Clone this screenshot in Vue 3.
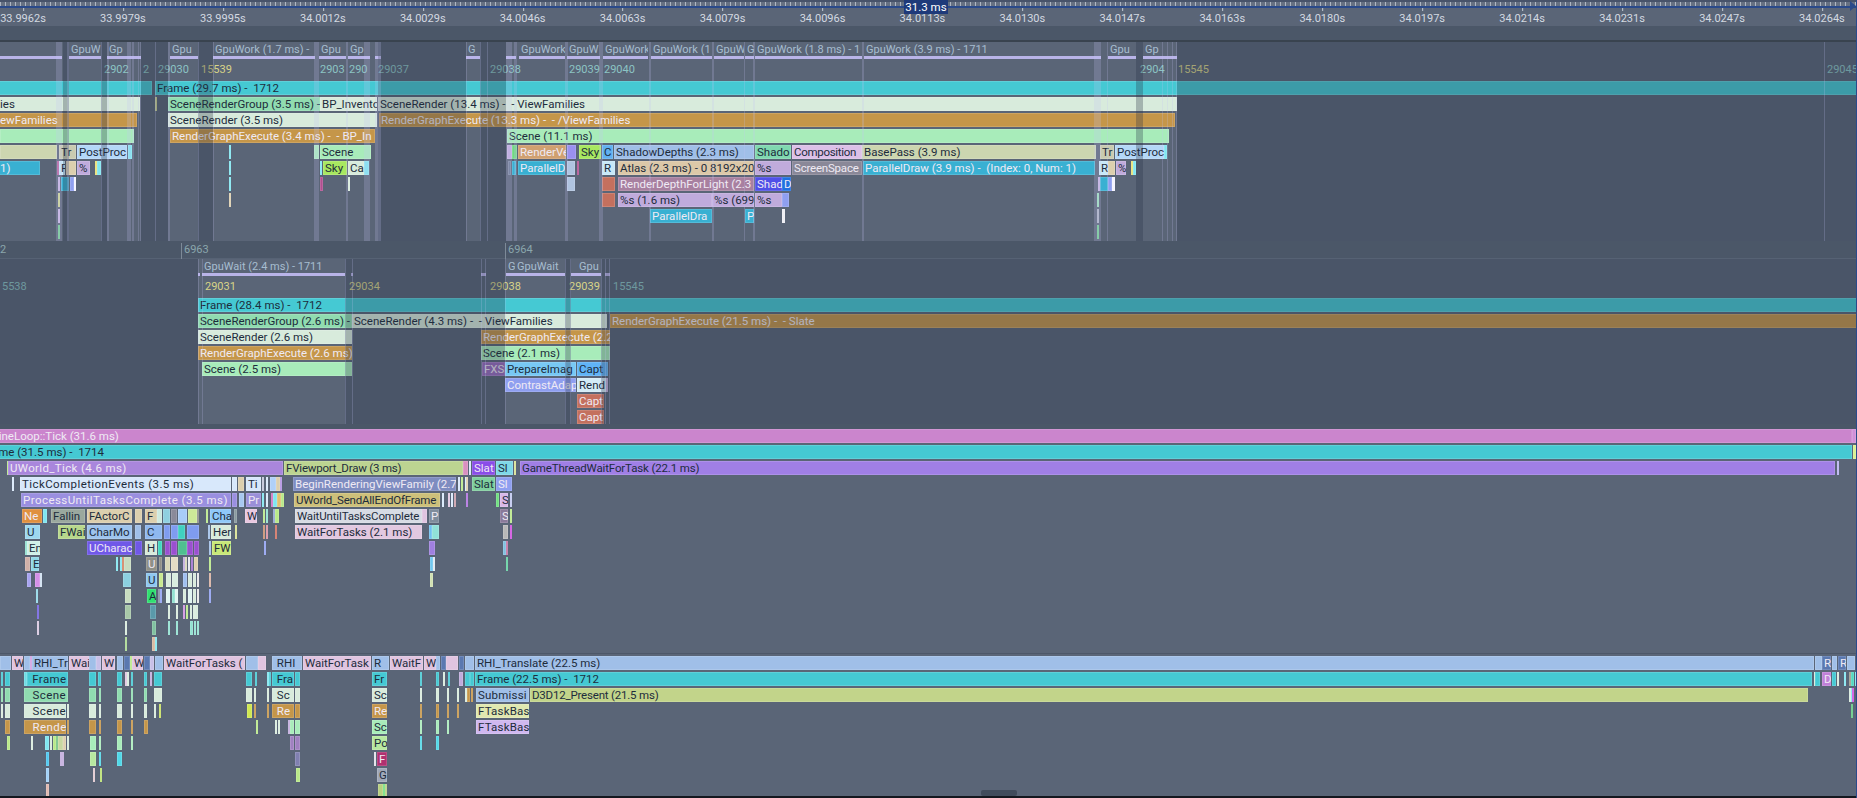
<template>
  <div class="profiler">
    <div class="ruler">
      <div class="tick-strip">
        <span class="span-badge">31.3 ms</span>
        <span class="end-arrow"></span>
      </div>
      <div class="scale">
        <span v-for="(t, i) in times" :key="t" class="time" :style="{ left: 23 + i * 99.94 + 'px' }">{{ t }}</span>
      </div>
    </div>
    <div class="ruler-gap"></div>

    <template v-for="track in tracks" :key="track.name">
      <div v-if="track.frames" class="frame-band">
        <span v-for="f in track.frames" :key="f[1]" class="frame-no" :class="{ mark: f[2] }" :style="{ left: f[0] + 'px' }">{{ f[1] }}</span>
      </div>
      <section class="track" :class="track.name">
        <div v-if="track.gpu" class="gpu-row">
          <div v-for="(g, i) in track.gpu" :key="i" class="gpu-span" :style="spanStyle(g)">
            <span class="gpu-label">{{ g[2] }}</span>
          </div>
        </div>
        <div v-if="track.numbers" class="num-row">
          <span v-for="(n, i) in track.numbers" :key="i" class="num" :style="{ left: n[0] + 'px', color: n[2] }">{{ n[1] }}</span>
        </div>
        <div v-for="(row, r) in track.rows" :key="r" class="row">
          <div v-for="(e, i) in row" :key="i" class="bar" :style="barStyle(e)">{{ e[3] }}</div>
        </div>
        <div v-for="(g, i) in track.gaps || []" :key="'g' + i" class="gap" :style="spanStyle(g)"></div>
        <div v-for="(s, i) in track.strips || []" :key="'s' + i" class="strip" :style="spanStyle(s)"></div>
        <div v-if="track.scroll" class="scroll-thumb"></div>
      </section>
    </template>
    <div class="bottom-edge"></div>
  </div>
</template>

<script setup>
const times = ['33.9962s', '33.9979s', '33.9995s', '34.0012s', '34.0029s', '34.0046s', '34.0063s', '34.0079s', '34.0096s', '34.0113s', '34.0130s', '34.0147s', '34.0163s', '34.0180s', '34.0197s', '34.0214s', '34.0231s', '34.0247s', '34.0264s']

// bar colours seen in the capture
const TEAL = '#45c9d3'
const PALE = '#d8ebdc'
const ORANGE = '#c59649'
const GREEN = '#a8ecba'
const MINT = '#90dcb0'
const SKY = '#39b0d2'
const LILAC = '#c0abdc'
const BLUE = '#a0bfe8'
const PINK = '#e0c4e0'
const RED = '#c4705e'
const CYAN = '#7fe6f0'
const PERI = '#8f9ff0'
const TAN = '#dccfae'
const LIME = '#b8e888'
const DARKBLUE = '#5a78b0'
const VIOLET = '#9a50d0'
const ICE = '#d8e8fb'

// these need pale text
const paleText = new Set([ORANGE, SKY, RED, '#a986dc', '#9a8fe0', '#8a4de8', '#7e8cc0', '#7058e8', '#e0903f', '#a880a0', '#5050e8', '#2070e0', '#8a8898', '#d0a070', '#b03070', '#9a6ec0', DARKBLUE, '#8f9088', '#cb85cd', '#9a8fd8', '#c080d8', '#8a7a9a', '#7f8c9c', PERI])

// the capture's hinted font runs some labels wider or tighter than Roboto
const tracking = {
  'TickCompletionEvents (3.5 ms)': 0.42,
  'ProcessUntilTasksComplete (3.5 ms)': 0.44,
  'UWorld_Tick (4.6 ms)': 0.35,
  'FViewport_Draw (3 ms)': -0.2,
  'GameThreadWaitForTask (22.1 ms)': -0.15,
  'UWorld_SendAllEndOfFrame': -0.2,
  'D3D12_Present (21.5 ms)': -0.2,
  'WaitUntilTasksComplete': -0.15,
  'Composition': -0.3,
  'ScreenSpace': -0.2,
  ' Frame': 0.4,
  '  Scene': 0.4,
  '  Rende': 0.4,
  'FTaskBas': 0.2,
  'Submissi': 0.2
}

const barStyle = (e) => ({
  left: e[0] + 'px',
  width: e[1] - e[0] + 'px',
  background: e[2],
  color: paleText.has(e[2]) ? '#efeaf4' : '#1d2c3c',
  letterSpacing: tracking[e[3]] ? tracking[e[3]] + 'px' : undefined
})

const spanStyle = (s) => ({ left: s[0] + 'px', width: s[1] - s[0] + 'px' })

const NUM = '#8cc4c4'
const YEL = '#d8d488'

const tracks = [
  {
    name: 'gpu-a',
    gpu: [[0, 56], [56, 62], [69, 101, 'GpuW'], [107, 130, 'Gp'], [130, 141], [170, 198, 'Gpu'], [213, 315, 'GpuWork (1.7 ms) -'], [319, 346, 'Gpu'], [348, 364, 'Gp'], [364, 370], [375, 381], [466, 480, 'G'], [506, 516], [519, 565, 'GpuWork'], [567, 600, 'GpuW'], [603, 648, 'GpuWork'], [651, 712, 'GpuWork (1'], [714, 744, 'GpuW'], [745, 754, 'G'], [755, 862, 'GpuWork (1.8 ms) - 1'], [864, 1094, 'GpuWork (3.9 ms) - 1711'], [1094, 1101], [1108, 1136, 'Gpu'], [1143, 1162, 'Gp'], [1162, 1177]],
    numbers: [[104, '2902', NUM], [143, '2', NUM], [158, '29030', NUM], [201, '15539', YEL], [320, '2903', NUM], [349, '290', NUM], [378, '29037', NUM], [490, '29038', NUM], [569, '29039', NUM], [604, '29040', NUM], [1140, '2904', NUM], [1178, '15545', YEL], [1827, '29045', NUM]],
    rows: [
      [[-40, 152, TEAL], [155, 1857, TEAL, 'Frame (29.7 ms) -  1712']],
      [[-2, 140, PALE, 'ies'], [155, 156, '#c8d080'], [168, 320, MINT, 'SceneRenderGroup (3.5 ms) - '], [320, 377, PALE, 'BP_Invento'], [378, 1177, PALE, 'SceneRender (13.4 ms) -  - ViewFamilies']],
      [[-2, 137, ORANGE, 'ewFamilies'], [168, 377, PALE, 'SceneRender (3.5 ms)'], [379, 1175, ORANGE, 'RenderGraphExecute (13.3 ms) -  - /ViewFamilies']],
      [[0, 134, GREEN], [170, 375, ORANGE, 'RenderGraphExecute (3.4 ms) -  - BP_In'], [507, 1169, GREEN, 'Scene (11.1 ms)']],
      [[0, 57, '#cdd6b0'], [59, 76, '#c9cbb0', 'Tr'], [77, 127, '#b4d8f8', 'PostProc'], [128, 132, CYAN], [229, 230, CYAN], [314, 319, GREEN], [320, 371, GREEN, 'Scene'], [507, 512, LILAC], [512, 517, '#70d880'], [518, 566, '#d0a070', 'RenderVe'], [567, 576, '#9a90f0'], [579, 601, '#a8e860', 'Sky'], [602, 613, '#60b0f0', 'C'], [614, 754, BLUE, 'ShadowDepths (2.3 ms)'], [755, 791, '#80d8b0', 'Shado'], [792, 862, '#dcc0e8', 'Composition'], [862, 1096, '#ccd6b0', 'BasePass (3.9 ms)'], [1100, 1114, '#c9cbb0', 'Tr'], [1115, 1164, '#b4d8f8', 'PostProc'], [1164, 1167, CYAN]],
      [[-2, 40, SKY, '1)'], [57, 59, '#b04f90'], [59, 65, '#c8e8f8', 'R'], [66, 76, TAN], [77, 90, LILAC, '%'], [95, 97, '#e8e070'], [97, 101, CYAN], [229, 230, CYAN], [320, 322, CYAN], [323, 347, '#a8e860', 'Sky'], [348, 364, PALE, 'Ca'], [364, 369, CYAN], [508, 511, '#6a7890'], [512, 516, SKY], [518, 565, SKY, 'ParallelD'], [567, 575, '#b0c4e0'], [577, 579, '#b04f90'], [602, 615, '#c8e8f8', 'R'], [618, 754, '#dcc8a8', 'Atlas (2.3 ms) - 0 8192x20'], [755, 791, LILAC, '%s'], [792, 862, '#8a8898', 'ScreenSpace'], [863, 1095, SKY, 'ParallelDraw (3.9 ms) -  (Index: 0, Num: 1)'], [1099, 1108, '#c8e8f8', 'R'], [1108, 1115, TAN], [1116, 1126, LILAC, '%'], [1131, 1133, '#e8e070'], [1133, 1136, CYAN]],
      [[58, 60, LILAC], [61, 69, SKY], [70, 74, PERI], [74, 76, '#f4f4ff'], [229, 230, CYAN], [320, 323, '#b04f90'], [348, 349, PALE], [567, 575, '#b0c4e0'], [602, 615, RED], [618, 754, '#a880a0', 'RenderDepthForLight (2.3'], [755, 782, '#5050e8', 'Shad'], [782, 791, '#2070e0', 'D'], [1098, 1100, LILAC], [1100, 1108, SKY], [1108, 1112, PERI], [1112, 1115, '#f4f4ff']],
      [[58, 60, '#c8d080'], [229, 230, TAN], [602, 615, RED], [618, 712, LILAC, '%s (1.6 ms)'], [712, 754, LILAC, '%s (699'], [755, 782, LILAC, '%s'], [782, 789, PERI], [1097, 1098, MINT]],
      [[58, 59, LILAC], [650, 712, SKY, 'ParallelDra'], [745, 754, SKY, 'P'], [782, 785, '#eeeef4'], [1097, 1098, '#a0a8b8']],
      [[58, 59, '#60c880'], [1097, 1098, '#60c880']]
    ],
    gaps: [[63, 69], [101, 107], [141, 168], [198, 213], [378, 466], [480, 506], [1136, 1143], [1177, 1857]],
    strips: [[56, 62], [67, 69], [101, 102], [107, 109], [127, 131], [132, 134], [138, 139], [140, 141], [155, 156], [168, 170], [198, 199], [213, 214], [314, 319], [346, 348], [364, 370], [375, 381], [466, 467], [480, 481], [487, 488], [506, 512], [514, 517], [565, 568], [599, 603], [649, 651], [712, 714], [744, 745], [753, 755], [862, 864], [1094, 1101], [1107, 1108], [1162, 1163], [1167, 1168], [1172, 1173], [1176, 1177], [1824, 1825]]
  },
  {
    name: 'gpu-b',
    frames: [[0, '2'], [184, '6963', true], [508, '6964', true]],
    gpu: [[198, 200], [202, 345, 'GpuWait (2.4 ms) - 1711'], [351, 353], [481, 486], [506, 515, 'G'], [515, 565, 'GpuWait'], [571, 577], [577, 601, 'Gpu'], [605, 610]],
    numbers: [[2, '5538', NUM], [205, '29031', YEL], [349, '29034', YEL], [490, '29038', YEL], [569, '29039', YEL], [613, '15545', NUM]],
    rows: [
      [[198, 1857, TEAL, 'Frame (28.4 ms) -  1712']],
      [[198, 352, MINT, 'SceneRenderGroup (2.6 ms) - '], [352, 607, PALE, 'SceneRender (4.3 ms) -  - ViewFamilies'], [610, 1857, ORANGE, 'RenderGraphExecute (21.5 ms) -  - Slate']],
      [[198, 352, PALE, 'SceneRender (2.6 ms)'], [481, 610, ORANGE, 'RenderGraphExecute (2.2']],
      [[198, 352, ORANGE, 'RenderGraphExecute (2.6 ms)'], [481, 610, GREEN, 'Scene (2.1 ms)']],
      [[202, 352, GREEN, 'Scene (2.5 ms)'], [482, 505, '#9a6ec0', 'FXS'], [505, 576, '#78c8f4', 'PrepareImag'], [577, 608, '#60b4f6', 'Capt']],
      [[505, 576, PERI, 'ContrastAdap'], [577, 606, '#d4ecf6', 'Rend'], [606, 608, LILAC]],
      [[577, 604, RED, 'Capt']],
      [[577, 604, RED, 'Capt']]
    ],
    gaps: [[0, 198], [345, 505], [565, 571], [601, 1857]],
    strips: [[198, 199], [202, 203], [345, 346], [352, 353], [481, 482], [485, 486], [505, 506], [565, 566], [570, 571], [601, 602], [605, 606], [609, 610]]
  },
  {
    name: 'game',
    rows: [
      [[-29, 1852, '#cb85cd', 'FEngineLoop::Tick (31.6 ms)'], [1852, 1856, '#d090d8']],
      [[-20, 1852, TEAL, 'Frame (31.5 ms) -  1714'], [1853, 1856, '#d8f090']],
      [[7, 8, LIME], [8, 283, '#a986dc', 'UWorld_Tick (4.6 ms)'], [284, 463, '#bcd491', 'FViewport_Draw (3 ms)'], [463, 468, '#d890c0'], [469, 470, ICE], [472, 495, '#8a4de8', 'Slat'], [496, 513, '#7fd8e8', 'Sl'], [514, 515, '#d8e090'], [520, 1835, '#a07fe6', 'GameThreadWaitForTask (22.1 ms)'], [1837, 1838, '#b8b0f0']],
      [[12, 13, ICE], [20, 231, ICE, 'TickCompletionEvents (3.5 ms)'], [232, 237, ICE], [238, 244, TAN], [246, 261, ICE, 'Ti'], [262, 264, '#c0c4d8'], [266, 267, ICE], [270, 276, '#b0d0f8'], [276, 280, TAN], [280, 282, '#b090e0'], [293, 456, '#7e8cc0', 'BeginRenderingViewFamily (2.7'], [458, 459, ICE], [461, 462, LIME], [465, 466, ICE], [466, 468, TAN], [472, 495, '#7fcf9e', 'Slat'], [496, 512, PERI, 'Sl']],
      [[21, 231, '#9a8fe0', 'ProcessUntilTasksComplete (3.5 ms)'], [232, 237, '#9a8fe0'], [239, 244, '#a8c8f0'], [246, 261, '#9a8fd8', 'Pr'], [262, 264, CYAN], [266, 267, ICE], [271, 273, '#d070c0'], [273, 277, CYAN], [277, 281, '#e0c070'], [281, 284, LIME], [294, 440, '#cdc07a', 'UWorld_SendAllEndOfFrame'], [442, 443, ICE], [448, 449, PINK], [451, 452, ICE], [454, 456, '#c89ca8'], [466, 467, '#b070e0'], [496, 499, '#70e080'], [500, 508, '#d8b8e8', 'S'], [510, 511, '#c0c8f0']],
      [[22, 42, '#e0903f', 'Ne'], [43, 47, CYAN], [51, 85, '#9aa89e', 'Fallin'], [87, 132, TAN, 'FActorC'], [135, 142, TAN], [145, 157, TAN, 'F'], [157, 162, '#cfeae0'], [163, 170, '#8fd0e0'], [171, 177, '#8a8a9a'], [178, 187, '#a8ccf8'], [188, 197, '#cde898'], [197, 199, '#8a8a8a'], [206, 207, LIME], [210, 231, '#8fc8f8', 'Cha'], [234, 237, '#8a9aa0'], [245, 257, '#e8c8e0', 'W'], [263, 264, LIME], [266, 268, '#90e0d0'], [273, 275, '#8fa0d0'], [275, 279, LIME], [295, 422, '#d7dbe4', 'WaitUntilTasksComplete'], [422, 427, PINK], [429, 439, '#7f8c9c', 'P'], [500, 508, '#8a7a9a', 'S'], [510, 511, LIME]],
      [[25, 40, '#9dd8f0', 'U'], [58, 85, '#b8d88c', 'FWai'], [87, 132, '#9ec4ee', 'CharMo'], [135, 141, BLUE], [145, 162, '#8fb8f0', 'C'], [164, 170, '#7f9cf0'], [171, 178, '#7f9cf0'], [178, 185, '#40d0c0'], [187, 199, '#7f9cf0'], [208, 210, BLUE], [211, 231, PALE, 'Her'], [235, 237, '#d8e090'], [263, 264, '#c89070'], [266, 268, '#d890a0'], [275, 276, '#d07060'], [295, 422, '#e2c8e0', 'WaitForTasks (2.1 ms)'], [429, 432, '#70c0f0'], [432, 439, '#90e0d8'], [503, 508, '#b8b8b8'], [510, 511, '#d050e0']],
      [[25, 27, '#90e0d0'], [27, 40, '#d0f0e8', 'En'], [87, 132, '#7058e8', 'UCharac'], [135, 142, '#7058e8'], [145, 157, PALE, 'H'], [158, 162, '#40d8c0'], [165, 170, VIOLET], [171, 177, VIOLET], [178, 187, '#50c090'], [187, 193, VIOLET], [194, 199, VIOLET], [209, 210, BLUE], [212, 231, '#c8e878', 'FW'], [264, 265, PERI], [429, 435, '#a080e0'], [503, 506, '#80c0e0'], [506, 508, '#c070a0']],
      [[25, 30, '#d0b0a8'], [31, 39, '#90d8e8', 'E'], [116, 117, CYAN], [120, 121, CYAN], [122, 123, '#d08060'], [124, 131, '#c8dcc0'], [146, 157, '#8f9088', 'U'], [159, 162, '#8f9088'], [165, 170, '#d8d8b8'], [171, 178, '#e4dcc4'], [183, 184, LILAC], [185, 187, '#d8d8b8'], [188, 190, '#e8e8f0'], [191, 193, '#a070d0'], [194, 198, TAN], [209, 210, LIME], [430, 433, '#70c8f0'], [433, 435, '#e0e8f0'], [506, 507, '#60d0a0']],
      [[27, 31, '#a8a4f0'], [35, 40, '#d490e8'], [40, 41, '#d0e0f0'], [123, 131, '#8cd0e0'], [146, 157, '#90c8f0', 'U'], [159, 163, '#c8e890'], [166, 171, PALE], [172, 178, '#d8eee0'], [183, 187, '#a0c0f0'], [188, 192, PALE], [193, 196, PALE], [197, 199, '#e8e8e8'], [209, 210, '#d8b0a0'], [430, 433, '#d0e0b0']],
      [[36, 38, '#90d8e8'], [125, 131, '#c8dcc0'], [147, 156, '#30e070', 'A'], [158, 159, '#7f8ca0'], [160, 161, PERI], [166, 170, '#e0f4f0'], [172, 175, '#90e0d0'], [175, 178, '#e0f4f0'], [183, 186, PALE], [188, 192, '#e0f4f0'], [193, 196, PALE], [197, 198, '#e8e8e8'], [209, 210, PERI]],
      [[37, 38, '#7060e0'], [125, 131, '#a8c8a8'], [150, 156, '#5a9aaa'], [168, 170, PALE], [176, 178, PALE], [183, 185, '#d090e0'], [186, 187, LIME], [190, 192, PALE], [193, 194, PALE], [195, 198, PALE]],
      [[37, 39, '#d8c8e0'], [125, 126, PALE], [152, 156, '#80c0a0'], [168, 170, '#90e0d0'], [176, 177, '#90e0d0'], [190, 193, '#90e0d0'], [194, 196, '#90e0d0'], [197, 199, '#90e0d0']],
      [[125, 126, '#a8d890'], [152, 155, '#d8b8a0'], [155, 156, CYAN]]
    ]
  },
  {
    name: 'rhi',
    scroll: true,
    rows: [
      [[0, 11, BLUE], [12, 23, PINK, 'W'], [24, 30, BLUE], [30, 32, '#d0a0e0'], [32, 68, BLUE, 'RHI_Tr'], [69, 89, PINK, 'Wai'], [89, 96, BLUE], [96, 101, '#c8c0e8'], [102, 115, PINK, 'W'], [117, 123, BLUE], [124, 130, DARKBLUE], [130, 131, LIME], [132, 143, PINK, 'W'], [144, 150, DARKBLUE], [150, 154, '#c8c0e8'], [155, 163, BLUE], [164, 245, PINK, 'WaitForTasks ('], [246, 258, BLUE], [258, 266, PINK], [272, 302, BLUE, ' RHI'], [303, 371, PINK, 'WaitForTask'], [372, 389, BLUE, 'R'], [390, 423, PINK, 'WaitF'], [424, 436, PINK, 'W'], [436, 440, BLUE], [441, 446, DARKBLUE], [446, 458, PINK], [459, 464, DARKBLUE], [465, 474, BLUE], [475, 1814, BLUE, 'RHI_Translate (22.5 ms)'], [1815, 1822, BLUE], [1822, 1831, DARKBLUE, 'R'], [1832, 1837, BLUE], [1838, 1846, DARKBLUE, 'R'], [1847, 1855, BLUE]],
      [[1, 3, TEAL], [5, 10, TEAL], [24, 27, '#6fdce4'], [27, 68, TEAL, ' Frame'], [89, 96, TEAL], [98, 101, TEAL], [117, 122, TEAL], [125, 127, PINK], [127, 128, PALE], [131, 132, TEAL], [144, 147, TEAL], [150, 152, LILAC], [154, 162, TEAL], [246, 252, TEAL], [255, 257, TEAL], [267, 268, CYAN], [269, 270, TEAL], [272, 294, TEAL, ' Fra'], [295, 300, TEAL], [372, 387, TEAL, 'Fr'], [420, 422, TEAL], [436, 439, TEAL], [443, 445, PALE], [448, 449, TEAL], [459, 463, LILAC], [465, 470, TEAL], [470, 474, TEAL], [475, 1812, TEAL, 'Frame (22.5 ms) -  1712'], [1814, 1815, PALE], [1815, 1820, TEAL], [1822, 1831, '#c080d8', 'D'], [1832, 1836, TEAL], [1837, 1839, PALE], [1844, 1846, CYAN], [1849, 1851, '#9a9a8a'], [1851, 1854, '#50d8c0'], [1855, 1856, CYAN]],
      [[1, 3, MINT], [5, 10, MINT], [24, 68, MINT, '  Scene'], [89, 96, MINT], [99, 101, MINT], [117, 122, MINT], [131, 132, MINT], [144, 147, MINT], [154, 162, PALE], [246, 252, PALE], [254, 256, PALE], [267, 268, PALE], [272, 294, PALE, ' Sc'], [295, 300, PALE], [372, 387, PALE, 'Sc'], [420, 422, PALE], [436, 439, PALE], [447, 448, PALE], [457, 458, PALE], [465, 467, PALE], [467, 470, ORANGE], [471, 472, ORANGE], [476, 529, BLUE, 'Submissi'], [530, 1808, '#c2d48a', 'D3D12_Present (21.5 ms)'], [1849, 1851, PALE], [1851, 1852, CYAN], [1852, 1854, '#d050e0']],
      [[1, 3, PALE], [5, 10, PALE], [24, 66, PALE, '  Scene'], [67, 68, PALE], [89, 96, PALE], [99, 101, PALE], [117, 122, PALE], [131, 132, PALE], [144, 147, PALE], [154, 155, PALE], [159, 161, '#c8e060'], [247, 252, '#d0e850'], [254, 256, ORANGE], [267, 268, ORANGE], [272, 294, ORANGE, ' Re'], [295, 300, ORANGE], [372, 387, ORANGE, 'Re'], [420, 422, ORANGE], [436, 439, ORANGE], [447, 448, ORANGE], [457, 458, ORANGE], [476, 529, '#e0e8b0', 'FTaskBas'], [1851, 1852, '#60c880']],
      [[5, 10, ORANGE], [24, 66, ORANGE, '  Rende'], [67, 68, ORANGE], [89, 96, ORANGE], [99, 101, ORANGE], [117, 122, ORANGE], [131, 132, ORANGE], [144, 148, ORANGE], [256, 257, LIME], [275, 276, PALE], [278, 280, PALE], [288, 289, LILAC], [290, 294, GREEN], [295, 300, GREEN], [372, 387, GREEN, 'Sc'], [420, 422, GREEN], [436, 439, GREEN], [447, 448, GREEN], [476, 529, '#d0b8f0', 'FTaskBas']],
      [[7, 10, LIME], [31, 32, PALE], [45, 49, CYAN], [50, 52, PALE], [53, 56, LIME], [56, 58, '#70c080'], [58, 63, '#c8d8a0'], [63, 66, TAN], [67, 68, PALE], [90, 96, GREEN], [99, 101, GREEN], [117, 122, GREEN], [131, 132, GREEN], [290, 294, '#a080c0'], [295, 300, '#a080c0'], [372, 387, '#b8e8a0', 'Po'], [420, 422, '#50d8e8'], [436, 439, '#50d8e8']],
      [[46, 49, '#50c8f0'], [60, 61, LILAC], [62, 63, LILAC], [90, 96, '#b8e8a0'], [99, 101, '#50d8e8'], [117, 122, '#50d8e8'], [295, 300, '#8080b0'], [374, 376, '#e0e0e8'], [377, 387, '#b03070', 'F']],
      [[46, 49, '#a0d0f8'], [93, 95, '#e0c8d0'], [100, 101, '#b8e070'], [296, 300, LIME], [377, 387, '#a0a8b8', 'G']],
      [[46, 49, '#e0b8b0'], [378, 383, '#b8d080'], [383, 385, '#70e080'], [385, 387, '#b8d080']]
    ]
  }
]
</script>

<style scoped>
.profiler {
  width: 1857px;
  height: 798px;
  overflow: hidden;
  position: relative;
  background: #5a6577;
  font-family: Roboto, "Liberation Sans", sans-serif;
  font-size: 11.5px;
  box-sizing: border-box;
  border-right: 1px solid #2a4a8a;
}

.ruler {
  height: 26px;
  background: #5a6577;
}

.tick-strip {
  position: relative;
  height: 8px;
  box-sizing: border-box;
  border-top: 2px solid #47536a;
  border-bottom: 2px solid #2a4a8a;
  background: repeating-linear-gradient(90deg, #aeb6c2 0 1px, #667183 1px 5px);
}

.span-badge {
  position: absolute;
  left: 904px;
  top: -2px;
  width: 44px;
  height: 14px;
  background: #1f3a7a;
  color: #fff;
  font-size: 11.5px;
  line-height: 14px;
  text-align: center;
  z-index: 2;
}

.end-arrow {
  position: absolute;
  right: 0;
  top: -1px;
  border-left: 6px solid #2a4a8a;
  border-top: 5px solid transparent;
  border-bottom: 5px solid transparent;
}

.scale {
  position: relative;
  height: 18px;
}

.time {
  position: absolute;
  top: 4px;
  transform: translateX(-50%);
  color: #d3d9e1;
  font-size: 11px;
  line-height: 13px;
}

.time::before {
  content: "";
  position: absolute;
  left: 50%;
  top: -4px;
  width: 1px;
  height: 3px;
  background: #c4cbd5;
}

.ruler-gap {
  height: 14px;
  background: #4b5768;
  border-bottom: 2px solid #39434f;
}

.track {
  position: relative;
  overflow: hidden;
  background: #5a6577;
}

.gpu-a {
  height: 199px;
}

.gpu-b {
  height: 165px;
}

.game {
  border-top: 5px solid #4b5768;
  border-bottom: 1px solid #4d5869;
  padding-bottom: 1px;
  box-sizing: border-box;
  height: 230px;
}

.rhi {
  height: 142px;
  margin-top: 2px;
}

.frame-band {
  position: relative;
  height: 17px;
  background: #4b5768;
  border-bottom: 1px solid #566274;
}

.frame-no {
  position: absolute;
  top: 2px;
  color: #8aa6ac;
  font-size: 11px;
  line-height: 14px;
}

.frame-no.mark::before {
  content: "";
  position: absolute;
  left: -3px;
  top: 0;
  width: 1px;
  height: 16px;
  background: #7d8a98;
}

.gpu-row {
  position: relative;
  height: 18px;
}

.gpu-span {
  position: absolute;
  top: 0;
  height: 17px;
  border-bottom: 3px solid #b9b4e8;
  box-sizing: border-box;
  overflow: hidden;
}

.gpu-label {
  display: block;
  padding-left: 2px;
  color: #a7bdd0;
  font-size: 11px;
  line-height: 16px;
  white-space: pre;
}

.num-row {
  position: relative;
  height: 21px;
}

.num {
  position: absolute;
  top: 3px;
  font-size: 11px;
  line-height: 14px;
}

.row {
  position: relative;
  height: 14px;
  margin-bottom: 2px;
}

.bar {
  position: absolute;
  top: 0;
  height: 14px;
  padding-left: 2px;
  box-sizing: border-box;
  overflow: hidden;
  white-space: pre;
  line-height: 15px;
  box-shadow: inset 0 0 0 1px rgba(255, 255, 255, 0.14);
}

.gap {
  position: absolute;
  top: 0;
  bottom: 0;
  background: rgba(40, 50, 70, 0.3);
  pointer-events: none;
}

.strip {
  position: absolute;
  top: 0;
  bottom: 0;
  background: rgba(196, 196, 245, 0.22);
  pointer-events: none;
}

.scroll-thumb {
  position: absolute;
  left: 981px;
  bottom: 2px;
  width: 36px;
  height: 6px;
  border-radius: 2px;
  background: #414c5c;
}

.bottom-edge {
  position: absolute;
  left: 0;
  right: 0;
  bottom: 0;
  height: 2px;
  background: #14181f;
}
</style>

<style>
html,
body {
  background: #5a6577;
}
</style>
